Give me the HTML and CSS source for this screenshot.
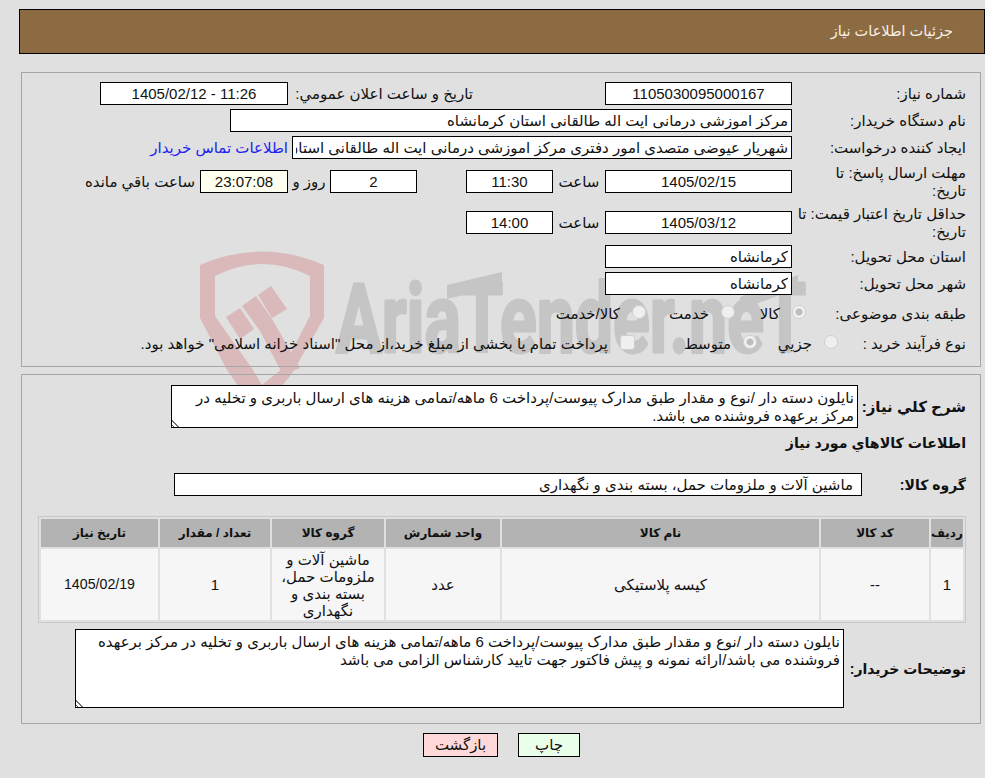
FILE: index.html
```html
<!DOCTYPE html>
<html lang="fa" dir="rtl">
<head>
<meta charset="utf-8">
<title>جزئیات اطلاعات نیاز</title>
<link rel="stylesheet" href="styles.css">
</head>
<body>
<svg class="watermark" width="640" height="150" viewBox="0 0 640 150" aria-hidden="true">
  <path class="wm-red" fill-rule="evenodd" d="M0 15 Q62 -12 124 15 V68 L91 125 L70 150 H48 L27 120 L0 68 Z M15 26 V66 L53 120 L62 135 L83 118 L110 66 V26 Q62 2 15 26 Z"/>
  <path class="wm-red" d="M26 67 L40 58 L54 79 L40 89 Z"/>
  <path class="wm-red" d="M42 56 L56 46 L72 69 L100 118 L83 125 L60 81 Z"/>
  <path class="wm-red" d="M58 45 L71 36 L87 59 L72 68 Z"/>
  <text class="wm-text" x="136" y="102" textLength="470" lengthAdjust="spacingAndGlyphs" direction="ltr">AriaTender.neT</text>
  <path class="wm-gray" d="M247 35 L302 22 V36 L247 49 Z"/>
  <path class="wm-gray" d="M540 47 L598 25 V38 L540 60 Z"/>
</svg>

<header class="page-title">جزئیات اطلاعات نیاز</header>

<section class="panel panel-info">
  <div class="row">
    <label class="lbl">شماره نیاز:</label>
    <input class="field f-date" readonly value="1105030095000167">
    <label class="lbl-public">تاریخ و ساعت اعلان عمومي:</label>
    <input class="field f-public" readonly value="11:26 - 1405/02/12">
  </div>
  <div class="row">
    <label class="lbl">نام دستگاه خریدار:</label>
    <input class="field f-buyer field-right" readonly value="مرکز اموزشی درمانی ایت اله طالقانی استان کرمانشاه">
  </div>
  <div class="row">
    <label class="lbl">ایجاد کننده درخواست:</label>
    <input class="field f-creator field-right" readonly value="شهریار عیوضی متصدی امور دفتری مرکز اموزشی درمانی ایت اله طالقانی استان کرمانشاه">
    <a class="contact" href="#">اطلاعات تماس خریدار</a>
  </div>
  <div class="row row-tall">
    <label class="lbl">مهلت ارسال پاسخ: تا<br>تاریخ:</label>
    <input class="field f-date" readonly value="1405/02/15">
    <span class="unit">ساعت</span>
    <input class="field f-time" readonly value="11:30">
    <input class="field f-days" readonly value="2">
    <span class="days-text">روز و</span>
    <input class="field f-remain" readonly value="23:07:08">
    <span class="remain-text">ساعت باقي مانده</span>
  </div>
  <div class="row row-tall">
    <label class="lbl">حداقل تاریخ اعتبار قیمت: تا<br>تاریخ:</label>
    <input class="field f-date" readonly value="1405/03/12">
    <span class="unit">ساعت</span>
    <input class="field f-time" readonly value="14:00">
  </div>
  <div class="row">
    <label class="lbl">استان محل تحویل:</label>
    <input class="field f-date field-right" readonly value="کرمانشاه">
  </div>
  <div class="row">
    <label class="lbl">شهر محل تحویل:</label>
    <input class="field f-date field-right" readonly value="کرمانشاه">
  </div>
  <div class="row row-choice row-cat">
    <label class="lbl-cat">طبقه بندی موضوعی:</label>
    <input class="choice" type="radio" name="cat" checked disabled><span class="opt opt-kala">کالا</span>
    <input class="choice" type="radio" name="cat" disabled><span class="opt opt-khedmat">خدمت</span>
    <input class="choice" type="radio" name="cat" disabled><span class="opt">کالا/خدمت</span>
  </div>
  <div class="row row-choice row-proc">
    <label class="lbl-proc">نوع فرآیند خرید :</label>
    <input class="choice" type="radio" name="proc" disabled><span class="opt opt-jozi">جزيي</span>
    <input class="choice" type="radio" name="proc" checked disabled><span class="opt opt-mota">متوسط</span>
    <input class="choice choice-box" type="checkbox" disabled><span class="opt">پرداخت تمام یا بخشی از مبلغ خرید،از محل "اسناد خزانه اسلامی" خواهد بود.</span>
  </div>
</section>

<section class="panel panel-goods">
  <div class="row row-desc">
    <label class="lbl-bold lbl-desc">شرح کلي نیاز:</label>
    <textarea class="area area-desc" readonly>نایلون دسته دار /نوع و مقدار طبق مدارک پیوست/پرداخت 6 ماهه/تمامی هزینه های ارسال باربری و تخلیه در مرکز برعهده فروشنده می باشد.</textarea>
  </div>
  <h2 class="goods-title">اطلاعات کالاهاي مورد نیاز</h2>
  <div class="row row-group">
    <label class="lbl-bold lbl-group">گروه کالا:</label>
    <input class="field f-group" readonly value="ماشین آلات و ملزومات حمل، بسته بندی و نگهداری">
  </div>
  <table class="goods">
    <colgroup>
      <col class="c-radif"><col class="c-code"><col class="c-name"><col class="c-unit"><col class="c-group"><col class="c-qty"><col class="c-date">
    </colgroup>
    <thead>
      <tr><th>ردیف</th><th>کد کالا</th><th>نام کالا</th><th>واحد شمارش</th><th>گروه کالا</th><th>تعداد / مقدار</th><th>تاریخ نیاز</th></tr>
    </thead>
    <tbody>
      <tr><td>1</td><td>--</td><td>کیسه پلاستیکی</td><td>عدد</td><td>ماشین آلات و ملزومات حمل، بسته بندی و نگهداری</td><td>1</td><td class="td-date">1405/02/19</td></tr>
    </tbody>
  </table>
  <div class="row row-notes">
    <label class="lbl-bold lbl-notes">توضیحات خریدار:</label>
    <textarea class="area area-notes" readonly>نایلون دسته دار /نوع و مقدار طبق مدارک پیوست/پرداخت 6 ماهه/تمامی هزینه های ارسال باربری و تخلیه در مرکز برعهده فروشنده می باشد/ارائه نمونه و پیش فاکتور جهت تایید کارشناس الزامی می باشد</textarea>
  </div>
</section>

<div class="actions">
  <button class="btn btn-print" type="button">چاپ</button>
  <button class="btn btn-back" type="button">بازگشت</button>
</div>
</body>
</html>
```

FILE: styles.css
```css
* { box-sizing: border-box; }
html, body { margin: 0; padding: 0; }
body {
  position: relative;
  width: 985px;
  height: 778px;
  overflow: hidden;
  background: #e0e0e0;
  color: #111;
  font-family: "Liberation Sans", "DejaVu Sans", sans-serif;
  font-size: 15px;
  padding-top: 9px;
}
.watermark { position: absolute; left: 200px; top: 250px; z-index: 0; }
.wm-red { fill: #d9b9ba; }
.wm-gray { fill: #c5c5c5; }
.wm-text {
  font-family: "Roboto", "Liberation Sans", sans-serif;
  font-weight: 700;
  font-size: 96px;
  fill: #c5c5c5;
  stroke: #c5c5c5;
  stroke-width: 3px;
  stroke-linejoin: round;
}
.page-title {
  position: relative;
  margin-left: 19px;
  height: 45px;
  background: #8c6b42;
  border: 1px solid #000;
  color: #f5f0e6;
  font-size: 14.5px;
  line-height: 43px;
  padding-right: 31px;
}
.panel {
  position: relative;
  margin-right: 4px;
  width: 960px;
  border: 1px solid #a6a6a6;
  padding-right: 14px;
}
.panel-info { margin-top: 18px; height: 295px; padding-top: 9px; display: flex; flex-direction: column; gap: 4px; }
.panel-goods { margin-top: 7px; height: 350px; padding-top: 10px; }
.row { display: flex; align-items: center; height: 23px; }
.row-tall { height: 37px; }
.row-choice { height: 26px; }
.lbl { width: 174px; line-height: 18px; flex: none; white-space: nowrap; }
.lbl-cat { width: 160px; flex: none; }
.lbl-proc { width: 128px; flex: none; }
.lbl-public { width: 185px; margin-right: 132px; flex: none; }
.field {
  height: 23px;
  flex: none;
  border: 1px solid #000;
  background: #fff;
  color: #111;
  font: inherit;
  text-align: center;
  padding: 0 3px;
  outline: none;
  border-radius: 0;
}
.field-right { text-align: right; }
.f-date { width: 187px; }
.f-public { width: 188px; }
.f-buyer { width: 562px; }
.f-creator { width: 500px; }
.contact { margin-right: 4px; color: #2222ee; text-decoration: none; white-space: nowrap; }
.unit { width: 52px; text-align: center; flex: none; }
.f-time { width: 87px; }
.f-days { width: 87px; margin-right: 49px; }
.days-text { width: 42px; text-align: center; flex: none; }
.f-remain { width: 88px; background: #fffff0; }
.remain-text { margin-right: 5px; white-space: nowrap; }
.choice {
  appearance: none;
  flex: none;
  width: 14px;
  height: 14px;
  margin: 0;
  border: 1px solid #cfcfcf;
  border-radius: 50%;
  background: #efefef;
  position: relative;
  top: -2px;
}
.choice:checked { background: radial-gradient(circle, #bdbdbd 0 3px, #f2f2f2 4px); }
.choice-box { border-radius: 3px; width: 15px; height: 15px; }
.row-cat { margin-top: 2px; }
.opt { margin-right: 12px; white-space: nowrap; flex: none; }
.opt-kala { width: 45px; }
.opt-khedmat { width: 63px; }
.opt-jozi { width: 55px; }
.opt-mota { width: 96px; }
.lbl-bold { font-weight: 700; flex: none; white-space: nowrap; }
.row-desc { height: 43px; }
.lbl-desc { width: 108px; }
.area {
  border: 1px solid #000;
  background: #fff;
  color: #111;
  font: inherit;
  line-height: 18px;
  padding: 3px;
  border-radius: 0;
  outline: none;
  flex: none;
  display: block;
}
.area::-webkit-resizer {
  background: linear-gradient(45deg, #fff 1px, #555 1px 2px, #fff 2px 4px, #777 4px 5px, #fff 5px) no-repeat left bottom / 10px 10px;
}
.area-desc { width: 687px; height: 43px; }
.goods-title { margin: 6px 0 0; height: 18px; font-size: 14.2px; line-height: 18px; font-weight: 700; }
.row-group { margin-top: 21px; height: 23px; }
.lbl-group { width: 104px; font-size: 14px; }
.f-group { width: 688px; text-align: right; padding-right: 8px; }
.goods {
  margin: 20px 0 0;
  width: 928px;
  table-layout: fixed;
  border-collapse: separate;
  border-spacing: 2px;
  border: 1px solid #c8c8c8;
  font-size: 15px;
}
.c-radif { width: 32px; }
.c-code { width: 108px; }
.c-name { width: 317px; }
.c-unit { width: 114px; }
.c-group { width: 112px; }
.c-qty { width: 110px; }
.c-date { width: 117px; }
.goods th { height: 28px; padding: 0; background: #b3b3b3; font-size: 12px; font-weight: 700; text-align: center; }
.goods td { height: 71px; padding: 0 8px; background: #f6f6f6; text-align: center; line-height: 17px; }
.goods .td-date { font-size: 14.2px; }
.row-notes { margin-top: 6px; height: 79px; }
.lbl-notes { width: 122px; font-size: 14px; }
.area-notes { width: 769px; height: 79px; }
.actions { position: relative; display: flex; gap: 20px; margin-top: 9px; padding-right: 405px; }
.btn {
  height: 24px;
  border: 1px solid #000;
  font: inherit;
  color: #111;
  padding: 0;
  border-radius: 0;
}
.btn-print { width: 62px; background: #eaffea; }
.btn-back { width: 75px; background: #ffd9d9; }
```
